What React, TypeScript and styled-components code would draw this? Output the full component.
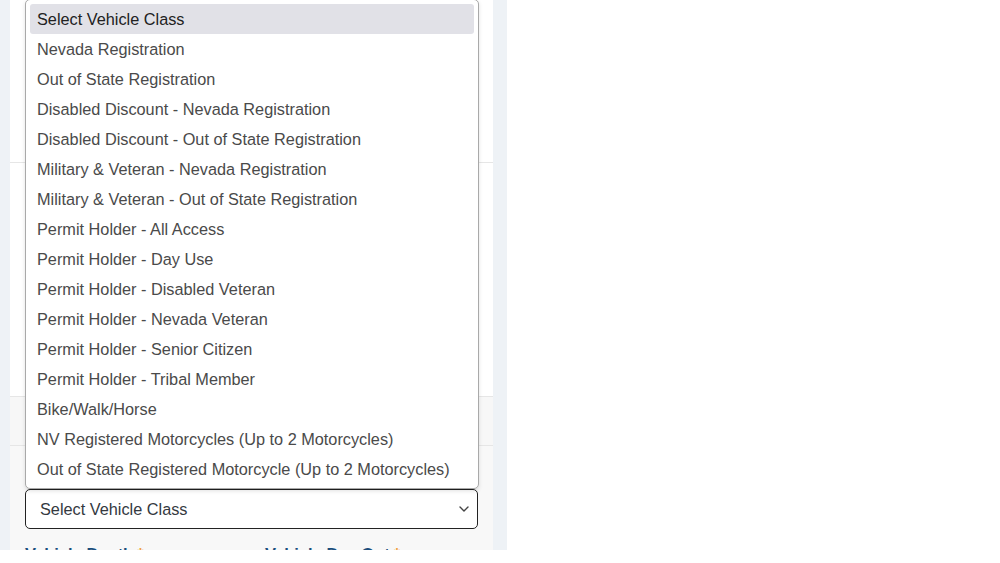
import React from 'react'
import styled, { createGlobalStyle } from 'styled-components'

const GlobalStyle = createGlobalStyle`
  html, body {
    margin: 0;
    padding: 0;
    background: #ffffff;
    font-family: "Liberation Sans", Arial, sans-serif;
  }
`

const Page = styled.div`
  box-sizing: border-box;
  width: 507px;
  height: 550px;
  padding: 0 14px 0 10px;
  background: #eef2f6;
  overflow: hidden;
`

const Card = styled.div`
  display: flex;
  flex-direction: column;
  background: #ffffff;
  height: 100%;
`

const Section = styled.div<{ h?: number; tint?: string }>`
  flex: ${({ h }) => (h ? `0 0 ${h}px` : '1 1 auto')};
  background: ${({ tint }) => tint || '#ffffff'};
  border-bottom: 1px solid #e6e6e6;
  box-sizing: border-box;
`

const FieldArea = styled.div`
  flex: 1 1 auto;
  background: #f8f8f8;
  padding: 43px 15px 0 15px;
`

const SelectWrap = styled.div`
  position: relative;
  width: 453px;
`

const SelectBox = styled.div`
  display: flex;
  align-items: center;
  justify-content: space-between;
  height: 40px;
  box-sizing: border-box;
  padding: 0 8px 0 14px;
  background: #ffffff;
  border: 1.5px solid #222;
  border-radius: 5px;
  font-size: 16.3px;
  color: #34393f;
`

const Menu = styled.ul`
  position: absolute;
  left: 0;
  right: -1px;
  bottom: 100%;
  margin: 0;
  padding: 4px 4px;
  list-style: none;
  background: #ffffff;
  border: 1px solid #a9a9a9;
  border-radius: 5px;
  box-shadow: 0 2px 4px rgba(0, 0, 0, 0.12);
`

const Option = styled.li<{ active?: boolean }>`
  height: 30px;
  line-height: 30px;
  padding: 0 7px;
  border-radius: 3px;
  font-size: 16.3px;
  white-space: nowrap;
  color: ${({ active }) => (active ? '#222' : '#4a4a4a')};
  background: ${({ active }) => (active ? '#e1e1e7' : 'transparent')};
`

const Labels = styled.div`
  display: flex;
  margin-top: 16px;
`

const Label = styled.div`
  flex: 0 0 240px;
  font-size: 16.5px;
  font-weight: bold;
  color: #1b4e7d;
  span {
    color: #f0a040;
    margin-left: 4px;
  }
`

const options = [
  'Select Vehicle Class',
  'Nevada Registration',
  'Out of State Registration',
  'Disabled Discount - Nevada Registration',
  'Disabled Discount - Out of State Registration',
  'Military & Veteran - Nevada Registration',
  'Military & Veteran - Out of State Registration',
  'Permit Holder - All Access',
  'Permit Holder - Day Use',
  'Permit Holder - Disabled Veteran',
  'Permit Holder - Nevada Veteran',
  'Permit Holder - Senior Citizen',
  'Permit Holder - Tribal Member',
  'Bike/Walk/Horse',
  'NV Registered Motorcycles (Up to 2 Motorcycles)',
  'Out of State Registered Motorcycle (Up to 2 Motorcycles)',
]

function Chevron() {
  return (
    <svg width="10" height="6" viewBox="0 0 10 6" fill="none">
      <path d="M1 1l4 4 4-4" stroke="#444" strokeWidth="1.4" strokeLinecap="round" strokeLinejoin="round" />
    </svg>
  )
}

export default function App() {
  return (
    <>
      <GlobalStyle />
      <Page>
        <Card>
          <Section h={163} />
          <Section h={234} />
          <Section h={49} tint="#f7f7f7" />
          <FieldArea>
            <SelectWrap>
              <Menu>
                {options.map((o, i) => (
                  <Option key={o} active={i === 0}>
                    {o}
                  </Option>
                ))}
              </Menu>
              <SelectBox>
                Select Vehicle Class
                <Chevron />
              </SelectBox>
            </SelectWrap>
            <Labels>
              <Label>
                Vehicle Depth<span>*</span>
              </Label>
              <Label>
                Vehicle Day Out<span>*</span>
              </Label>
            </Labels>
          </FieldArea>
        </Card>
      </Page>
    </>
  )
}
